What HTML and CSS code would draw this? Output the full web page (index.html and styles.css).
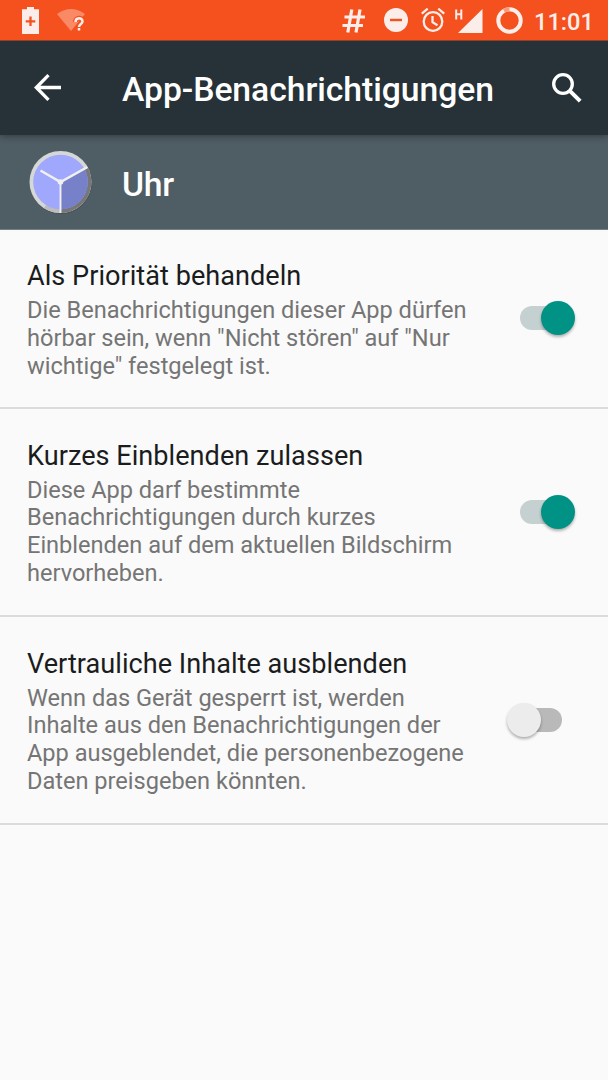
FILE: index.html
```html
<!DOCTYPE html>
<html lang="de">
<head>
    <meta charset="UTF-8">
    <meta name="viewport" content="width=device-width, initial-scale=1.0">
    <title>App-Benachrichtigungen</title>
    <link rel="stylesheet" href="styles.css">
</head>
<body>

    <div class="status-bar">
        <svg class="icon-battery" width="17" height="27" viewBox="0 0 17 27">
            <path fill="#fbeeea" d="M5 0h7v2.200h5V27H0V2.200h5z"/>
            <path stroke="#f4511e" stroke-width="2.300" d="M8.500 9.500v9.500M3.700 14.300h9.600"/>
        </svg>
        <svg class="icon-wifi" width="28" height="24" viewBox="0 0 28 24">
            <path fill="#fa8a66" d="M0 5Q14 -5 28 5L14 22z"/>
            <path fill="none" stroke="#f4511e" stroke-width="5" d="M18.500 13c0-5 7-5 7-.5 0 2.500-3.500 2.500-3.500 5.500v2"/>
            <path fill="none" stroke="#fbeeea" stroke-width="2.500" d="M18.500 13c0-5 7-5 7-.5 0 2.500-3.500 2.500-3.500 5.500M22 19v2.500"/>
        </svg>
        <svg class="icon-hash" width="23" height="24" viewBox="0 0 23 24">
            <path stroke="#fbeeea" stroke-width="3.200" d="M9.800 0.500L5.800 23.500M18 0.500L14 23.500M2.500 8h20.500M0.500 16.500h20.500"/>
        </svg>
        <svg class="icon-dnd" width="24" height="24" viewBox="0 0 24 24">
            <circle cx="12" cy="12" r="12" fill="#fbeeea"/>
            <path stroke="#f4511e" stroke-width="2.400" d="M6 12h12"/>
        </svg>
        <svg class="icon-alarm" width="24" height="24" viewBox="0 0 24 24">
            <g fill="none" stroke="#fbeeea" stroke-width="2.300">
                <circle cx="12" cy="13.500" r="9.300"/>
                <path d="M11.500 8v6.200l5 3M.8 5.600L6.700.7M23.200 5.600L17.300.7"/>
            </g>
        </svg>
        <svg class="icon-signal" width="28" height="25" viewBox="0 0 28 25">
            <path fill="#fbeeea" d="M27.500 1v24H3z"/>
            <path fill="none" stroke="#fbeeea" stroke-width="2" d="M1.200 1.500v10M6.300 1.500v10M1.200 6.300h5"/>
        </svg>
        <svg class="icon-ring" width="27" height="27" viewBox="0 0 27 27">
            <g fill="none" stroke-width="4">
                <circle cx="13.500" cy="13.500" r="11.200" stroke="#fbeeea"/>
                <path stroke="#fa9a7a" d="M7.900 3.800A11.200 11.200 0 0 1 13.500 2.300"/>
            </g>
        </svg>
        <span class="clock">11:01</span>
    </div>

    <header>
        <svg class="icon-back" width="27" height="27" viewBox="0 0 27 27">
            <path fill="none" stroke="#fff" stroke-width="3.300" d="M27 13.500H3M14.500 1.200L2.300 13.500l12.200 12.300"/>
        </svg>
        <h1>App-Benachrichtigungen</h1>
        <svg class="icon-search" width="30" height="30" viewBox="0 0 30 30">
            <circle cx="11" cy="11" r="9.300" fill="none" stroke="#fff" stroke-width="3.300"/>
            <path stroke="#fff" stroke-width="4" d="M17.800 17.800l10.400 10.400"/>
        </svg>
    </header>

    <div class="app-header">
        <svg class="icon-clock" width="64" height="66" viewBox="0 0 64 66">
            <circle cx="32" cy="33" r="31" fill="#465158"/>
            <circle cx="31.500" cy="32" r="31" fill="#d6d7d7"/>
            <path fill="#777" d="M31.500 32L58.500 17A31 31 0 0 1 31.500 63z"/>
            <path fill="#bcbcbc" d="M31.500 63A31 31 0 0 1 15 58l2-3 14.500 4z"/>
            <circle cx="31.500" cy="32" r="27.300" fill="#9fa8fc"/>
            <path fill="#7681c9" d="M31.500 32L55.300 18.600A27.300 27.300 0 0 1 31.500 59.300z"/>
            <path fill="none" stroke="#f0f0ee" stroke-width="2.500" d="M11.500 20.500l20 11.500 27-15"/>
            <path stroke="#f0f0ee" stroke-width="1.900" d="M31.500 32v31"/>
            <circle cx="31.500" cy="32" r="2.800" fill="#f0f0ee"/>
        </svg>
        <h2>Uhr</h2>
    </div>

    <div class="settings">
        <div class="setting">
            <div class="text">
                <h3>Als Priorität behandeln</h3>
                <p>Die Benachrichtigungen dieser App dürfen<br>hörbar sein, wenn "Nicht stören" auf "Nur<br>wichtige" festgelegt ist.</p>
            </div>
            <div class="switch on"><div class="thumb"></div></div>
        </div>
        <div class="setting">
            <div class="text">
                <h3>Kurzes Einblenden zulassen</h3>
                <p>Diese App darf bestimmte<br>Benachrichtigungen durch kurzes<br>Einblenden auf dem aktuellen Bildschirm<br>hervorheben.</p>
            </div>
            <div class="switch on"><div class="thumb"></div></div>
        </div>
        <div class="setting">
            <div class="text">
                <h3>Vertrauliche Inhalte ausblenden</h3>
                <p>Wenn das Gerät gesperrt ist, werden<br>Inhalte aus den Benachrichtigungen der<br>App ausgeblendet, die personenbezogene<br>Daten preisgeben könnten.</p>
            </div>
            <div class="switch"><div class="thumb"></div></div>
        </div>
    </div>

</body>
</html>
```
FILE: styles.css
```css
body {
    font-family: Roboto, sans-serif;
    background-color: #fafafa;
    margin: 0;
    padding: 0;
}

h1, h2, h3, p {
    margin: 0;
}

svg {
    display: block;
    flex: none;
}

.status-bar {
    display: flex;
    align-items: flex-start;
    box-sizing: border-box;
    height: 41px;
    padding: 7px 14px 0 22px;
    background: #f4511e;
    border-bottom: 1px solid #8f4029;
}

.icon-wifi {
    margin: 2px 0 0 18px;
}

.icon-hash {
    margin: 2px 0 0 auto;
}

.icon-dnd {
    margin: 1px 0 0 19px;
}

.icon-alarm {
    margin: 1px 0 0 13px;
}

.icon-signal {
    margin: 1px 0 0 10px;
}

.icon-ring {
    margin-left: 13px;
}

.clock {
    margin-left: 11px;
    width: 60px;
    color: #fbeeea;
    font-size: 23.6px;
    line-height: 30px;
    font-weight: 500;
    white-space: nowrap;
}

header {
    display: flex;
    align-items: center;
    box-sizing: border-box;
    height: 94px;
    padding: 0 26px 0 34px;
    background: #263238;
    /* keeps the shadow above the app header */
    position: relative;
    box-shadow: 0 1px 7px rgba(0, 0, 0, 0.4);
    clip-path: inset(0 0 -10px 0);
}

    header h1 {
        flex: 1;
        margin-left: 61px;
        padding-top: 3px;
        color: #fff;
        font-size: 33.7px;
        line-height: 40px;
        font-weight: 500;
        letter-spacing: -0.05px;
        white-space: nowrap;
    }

.icon-back {
    margin-top: -1px;
}

.icon-search {
    margin-top: -1px;
}

.app-header {
    display: flex;
    align-items: center;
    box-sizing: border-box;
    height: 95px;
    padding: 2px 0 0 29px;
    background: #4f5d64;
    border-bottom: 1px solid #72807f;
}

    .app-header h2 {
        margin-left: 29px;
        padding-top: 4px;
        color: #fff;
        font-size: 33.7px;
        line-height: 40px;
        font-weight: 500;
        letter-spacing: -0.3px;
    }

.setting {
    display: flex;
    align-items: center;
    justify-content: space-between;
    box-sizing: border-box;
    height: 208px;
    padding: 0 33px 0 27px;
    border-bottom: 2px solid #dcdcdc;
}

    .setting .text {
        padding-top: 3px;
    }

    .setting:first-child {
        height: 179px;
        padding-bottom: 1px;
    }

        .setting:first-child .text {
            padding-top: 5px;
        }

    .setting h3 {
        color: #1a1c1d;
        font-size: 27.1px;
        line-height: 32px;
        font-weight: 400;
        letter-spacing: 0.03px;
    }

    .setting p {
        margin-top: 5px;
        color: #757575;
        font-size: 23.6px;
        line-height: 27.75px;
        letter-spacing: -0.02px;
        white-space: nowrap;
    }

.switch {
    position: relative;
    flex: none;
    width: 42px;
    height: 24px;
    margin-right: 13px;
    border-radius: 12px;
    background: #b9b9b9;
}

.switch.on {
    background: #c5d0d0;
}

.thumb {
    position: absolute;
    top: -5px;
    left: -13px;
    width: 34px;
    height: 34px;
    border-radius: 50%;
    background: #ececec;
    box-shadow: 0 2px 3px rgba(0, 0, 0, 0.3);
}

.switch.on .thumb {
    left: 21px;
    background: #009284;
}
```
